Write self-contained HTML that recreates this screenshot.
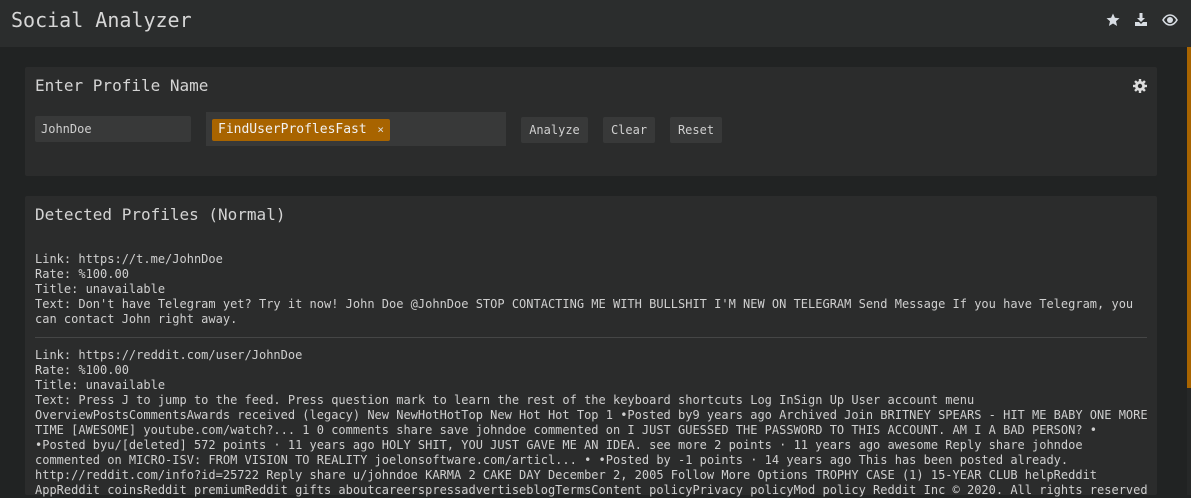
<!DOCTYPE html>
<html><head><style>
html,body{margin:0;padding:0;}
body{width:1191px;height:495px;overflow:hidden;background:#212323;font-family:"DejaVu Sans Mono","Liberation Mono",monospace;color:#d0d0d0;position:relative;}
.hdr{position:absolute;left:0;top:0;width:1191px;height:47px;background:#2b2d2d;}
.hdr .t{position:absolute;left:11px;top:8px;font-size:20px;color:#d6d6d6;}
.ic{position:absolute;top:13px;}
.panel{position:absolute;left:25px;width:1132px;background:#2b2c2c;border-radius:2px;}
.ptitle{position:absolute;left:10px;font-size:16px;color:#d4d4d4;}
.inp{position:absolute;background:#383939;font-size:12px;color:#cfcfcf;}
.btn{position:absolute;top:117px;height:26px;background:#383939;border-radius:2px;font-size:12px;line-height:27px;text-align:center;color:#d0d0d0;}
.tag{position:absolute;left:212px;top:119px;height:22px;width:178px;background:#a86400;border-radius:2px;font-size:13px;color:#f2f2f2;line-height:22px;}
pre{margin:0;font-family:inherit;font-size:12px;line-height:15px;color:#cfcfcf;position:absolute;left:35px;}
.sep{position:absolute;left:35px;width:1112px;height:1px;background:#454646;top:337px;}
.sb{position:absolute;left:1187px;top:47px;width:4px;height:341px;background:#a86400;}
.sbt{position:absolute;left:1187px;top:388px;width:4px;height:107px;background:#262828;}
</style></head><body>
<div class="hdr"><div class="t">Social Analyzer</div>
<svg class="ic" style="left:1106px" width="14" height="14" viewBox="0 0 14 14"><path d="M7 0.5L8.9 4.8 13.5 5.2 10 8.3 11.1 13 7 10.5 2.9 13 4 8.3 0.5 5.2 5.1 4.8Z" fill="#d8dde3"/></svg>
<svg class="ic" style="left:1134px" width="14" height="14" viewBox="0 0 14 14"><path d="M5.5 0h3v5h2.5L7 9 3 5h2.5Z M1 9h4l2 2 2-2h4v4H1Z" fill="#d8dde3"/></svg>
<svg class="ic" style="left:1162px;top:14px" width="16" height="12" viewBox="0 0 16 12"><path d="M1 6C3 2.5 5.5 1 8 1s5 1.5 7 5c-2 3.5-4.5 5-7 5S3 9.5 1 6Z" fill="none" stroke="#d8dde3" stroke-width="1.6"/><circle cx="8" cy="6" r="3" fill="#d8dde3"/></svg>
</div>
<div class="panel" style="top:67px;height:109px;">
<div class="ptitle" style="top:9px">Enter Profile Name</div>
<svg style="position:absolute;left:1108px;top:12px" width="14" height="14" viewBox="0 0 14 14"><g fill="#dcdcdc"><circle cx="7" cy="7" r="5"/><rect x="5.8" y="0" width="2.4" height="14"/><rect x="0" y="5.8" width="14" height="2.4"/><rect x="5.8" y="0" width="2.4" height="14" transform="rotate(45 7 7)"/><rect x="5.8" y="0" width="2.4" height="14" transform="rotate(-45 7 7)"/></g><circle cx="7" cy="7" r="2.2" fill="#2b2c2c"/></svg>
</div>
<div class="inp" style="left:35px;top:116px;width:156px;height:26px;line-height:27px;border-radius:2px;"><span style="padding-left:6px">JohnDoe</span></div>
<div class="inp" style="left:206px;top:112px;width:300px;height:34px;"></div>
<div class="tag"><span style="padding-left:6px">FindUserProflesFast</span><span style="position:absolute;right:6px;font-size:11px;color:#ddd">×</span></div>
<div class="btn" style="left:521px;width:67px">Analyze</div>
<div class="btn" style="left:603px;width:52px">Clear</div>
<div class="btn" style="left:670px;width:52px">Reset</div>
<div class="panel" style="top:196px;height:299px;">
<div class="ptitle" style="top:9px">Detected Profiles (Normal)</div>
</div>
<pre style="top:252px">Link: https://t.me/JohnDoe
Rate: %100.00
Title: unavailable
Text: Don't have Telegram yet? Try it now! John Doe @JohnDoe STOP CONTACTING ME WITH BULLSHIT I'M NEW ON TELEGRAM Send Message If you have Telegram, you
can contact John right away.</pre>
<div class="sep"></div>
<pre style="top:348px">Link: https://reddit.com/user/JohnDoe
Rate: %100.00
Title: unavailable
Text: Press J to jump to the feed. Press question mark to learn the rest of the keyboard shortcuts Log InSign Up User account menu
OverviewPostsCommentsAwards received (legacy) New NewHotHotTop New Hot Hot Top 1 •Posted by9 years ago Archived Join BRITNEY SPEARS - HIT ME BABY ONE MORE
TIME [AWESOME] youtube.com/watch?... 1 0 comments share save johndoe commented on I JUST GUESSED THE PASSWORD TO THIS ACCOUNT. AM I A BAD PERSON? •
•Posted byu/[deleted] 572 points · 11 years ago HOLY SHIT, YOU JUST GAVE ME AN IDEA. see more 2 points · 11 years ago awesome Reply share johndoe
commented on MICRO-ISV: FROM VISION TO REALITY joelonsoftware.com/articl... • •Posted by -1 points · 14 years ago This has been posted already.
http://reddit.com/info?id=25722 Reply share u/johndoe KARMA 2 CAKE DAY December 2, 2005 Follow More Options TROPHY CASE (1) 15-YEAR CLUB helpReddit
AppReddit coinsReddit premiumReddit gifts aboutcareerspressadvertiseblogTermsContent policyPrivacy policyMod policy Reddit Inc © 2020. All rights reserved</pre>
<div class="sb"></div><div class="sbt"></div>
</body></html>
